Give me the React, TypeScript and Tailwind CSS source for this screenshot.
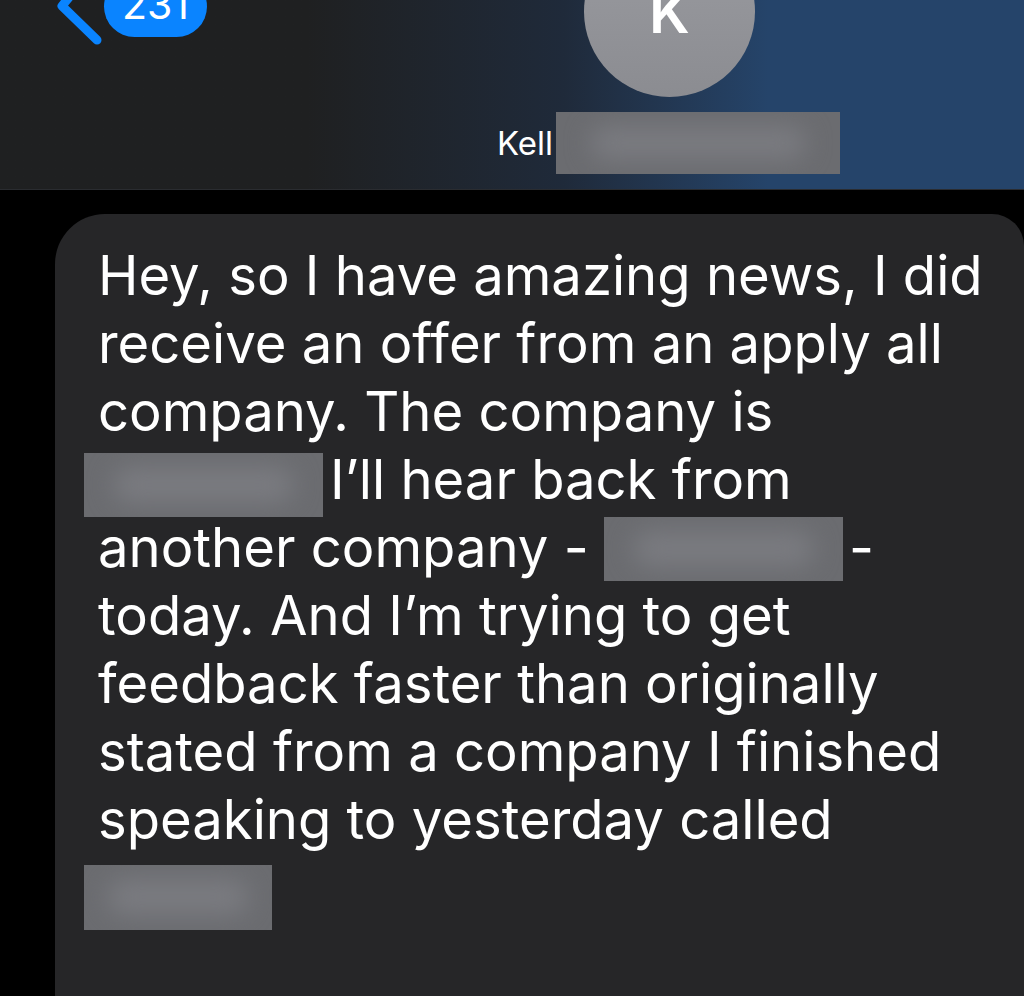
import { ReactNode } from "react";

function Redacted({ w, h, className = "" }: { w: string; h: string; className?: string }) {
  return (
    <span
      className={`relative inline-block overflow-hidden bg-[#6b6c70] align-middle ${w} ${h} ${className}`}
    >
      <span className="absolute inset-x-[12%] inset-y-[22%] rounded-full bg-[#7a7b80] blur-md" />
    </span>
  );
}

function Line({ children }: { children: ReactNode }) {
  return <div className="h-[68px] whitespace-nowrap leading-[68px]">{children}</div>;
}

export default function App() {
  return (
    <div
      className="h-[996px] w-[1024px] overflow-hidden bg-black text-white"
      style={{ fontFamily: "Inter, 'Noto Sans', sans-serif" }}
    >
      {/* conversation header */}
      <header className="flex h-[190px] items-start overflow-hidden border-b border-[#2a2c30] bg-gradient-to-r from-[#1f2021] from-30% via-[#1f2a3a] via-55% to-[#25446a] to-75%">
        <div className="flex w-[210px] items-start">
          <svg
            className="ml-[52px] -mt-[40px] h-[88px] w-[52px] shrink-0"
            viewBox="0 0 52 88"
            fill="none"
          >
            <path
              d="M44 4 L10 46 L45 80"
              stroke="#0a84ff"
              strokeWidth="9"
              strokeLinecap="round"
              strokeLinejoin="round"
            />
          </svg>
          <span className="-mt-[24px] flex h-[61px] w-[103px] items-end justify-center rounded-full bg-[#0a84ff] pb-[12px] text-[41px] leading-none text-white">
            231
          </span>
        </div>
        <div className="ml-[287px] flex w-[345px] flex-col items-center">
          <div className="-mt-[74px] flex h-[171px] w-[171px] items-end justify-center rounded-full bg-gradient-to-b from-[#9b9ca1] to-[#8b8c91] pb-[56px]">
            <span className="text-[58px] font-semibold leading-none text-white">K</span>
          </div>
          <div className="mt-[15px] flex h-[62px] items-center self-start">
            <span className="text-[33px] leading-none text-white">Kell</span>
            <Redacted w="w-[284px]" h="h-[62px]" className="ml-[3px]" />
          </div>
        </div>
      </header>

      {/* incoming message bubble */}
      <div className="ml-[55px] mt-[24px] h-[800px] w-[969px] rounded-tl-[50px] rounded-tr-[32px] bg-[#262628] pl-[43px] pt-[27px] text-[54.4px] text-white">
        <Line>Hey, so I have amazing news, I did</Line>
        <Line>receive an offer from an apply all</Line>
        <Line>company. The company is</Line>
        <Line>
          <Redacted w="w-[239px]" h="h-[64px]" className="-ml-[14px] -mt-[28px] top-[15px] mr-[7px]" />
          I’ll hear back from
        </Line>
        <Line>
          another company -{" "}
          <Redacted w="w-[239px]" h="h-[64px]" className="-mt-[28px] top-[11px]" />
          <span className="ml-[6px]">-</span>
        </Line>
        <Line>today. And I’m trying to get</Line>
        <Line>feedback faster than originally</Line>
        <Line>stated from a company I finished</Line>
        <Line>speaking to yesterday called</Line>
        <Line>
          <Redacted w="w-[188px]" h="h-[65px]" className="-ml-[14px] -mt-[28px] top-[19px]" />
        </Line>
      </div>
    </div>
  );
}
